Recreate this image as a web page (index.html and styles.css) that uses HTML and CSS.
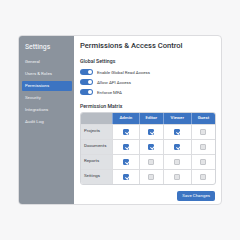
FILE: index.html
```html
<!DOCTYPE html>
<html lang="en">
<head>
  <meta charset="utf-8">
  <meta name="viewport" content="width=device-width, initial-scale=1.0">
  <title>Settings - Permissions</title>
  <link rel="stylesheet" href="styles.css">
</head>
<body>

  <div class="panel">
    <aside class="sidebar">
      <h2>Settings</h2>
      <a class="nav-item">General</a>
      <a class="nav-item">Users &amp; Roles</a>
      <a class="nav-item active">Permissions</a>
      <a class="nav-item">Security</a>
      <a class="nav-item">Integrations</a>
      <a class="nav-item">Audit Log</a>
    </aside>

    <main class="content">
      <h1>Permissions &amp; Access Control</h1>

      <h3>Global Settings</h3>
      <div class="toggle-row"><span class="toggle"></span>Enable Global Read Access</div>
      <div class="toggle-row"><span class="toggle"></span>Allow API Access</div>
      <div class="toggle-row"><span class="toggle"></span>Enforce MFA</div>

      <h3 class="matrix-title">Permission Matrix</h3>
      <table class="matrix">
        <tr>
          <th class="corner"></th>
          <th>Admin</th>
          <th>Editor</th>
          <th>Viewer</th>
          <th>Guest</th>
        </tr>
        <tr>
          <td class="row-label">Projects</td>
          <td><span class="check on"></span></td>
          <td><span class="check on"></span></td>
          <td><span class="check on"></span></td>
          <td><span class="check"></span></td>
        </tr>
        <tr>
          <td class="row-label">Documents</td>
          <td><span class="check on"></span></td>
          <td><span class="check on"></span></td>
          <td><span class="check on"></span></td>
          <td><span class="check"></span></td>
        </tr>
        <tr>
          <td class="row-label">Reports</td>
          <td><span class="check on"></span></td>
          <td><span class="check"></span></td>
          <td><span class="check"></span></td>
          <td><span class="check"></span></td>
        </tr>
        <tr>
          <td class="row-label">Settings</td>
          <td><span class="check on"></span></td>
          <td><span class="check"></span></td>
          <td><span class="check"></span></td>
          <td><span class="check"></span></td>
        </tr>
      </table>

      <div class="actions">
        <button>Save Changes</button>
      </div>
    </main>
  </div>

</body>
</html>
```

FILE: styles.css
```css
body {
  font-family: Roboto, "Liberation Sans", sans-serif;
  margin: 0;
  height: 240px;
  display: flex;
  justify-content: center;
  align-items: center;
  background-color: #f7f7f8;
}
.panel {
  display: flex;
  width: 204px;
  height: 170px;
  border: 1px solid #dcdcdf;
  border-radius: 4px;
  background-color: #fff;
  overflow: hidden;
  box-sizing: border-box;
}

/* Zijbalk */
.sidebar {
  width: 55px;
  flex-shrink: 0;
  background-color: #8b939d;
  padding: 7px 2px 0 3px;
  box-sizing: border-box;
}
.sidebar h2 {
  margin: 0 0 6px 3px;
  font-size: 6.8px;
  font-weight: 500;
  color: #eef0f3;
}
.nav-item {
  display: block;
  height: 10px;
  line-height: 10px;
  padding-left: 3px;
  margin-bottom: 2px;
  font-size: 4.4px;
  color: #eceff2;
  border-radius: 1px;
}
.nav-item.active { background-color: #3c74c2; color: #fff; }

/* Inhoud */
.content {
  flex: 1;
  padding: 5px 6px 0 6px;
  font-size: 4.4px;
  line-height: 1.2;
}
h1 { margin: 0 0 8px; font-size: 7.6px; font-weight: 500; color: #2b2f36; }
h3 { margin: 0 0 3px; font-size: 5.2px; font-weight: 500; color: #2b2f36; }
.matrix-title { margin-top: 6px; margin-bottom: 2px; }

.toggle-row {
  display: flex;
  align-items: center;
  height: 10px;
  color: #3a3e45;
}
.toggle {
  position: relative;
  width: 13px;
  height: 6px;
  margin-right: 4px;
  border-radius: 3px;
  background-color: #3c74c2;
}
.toggle::after {
  content: "";
  position: absolute;
  right: 1px;
  top: 1px;
  width: 4px;
  height: 4px;
  border-radius: 50%;
  background-color: #fff;
}

table.matrix {
  width: 136px;
  border-collapse: separate;
  border-spacing: 0;
  border: 1px solid #d3d5d9;
  border-radius: 3px;
  overflow: hidden;
  font-size: 4.4px;
  line-height: 1;
}
.matrix th {
  height: 11px;
  padding: 0;
  font-weight: 500;
  color: #fff;
  background-color: #3c74c2;
  border-left: 1px solid #7fa3d8;
}
.matrix th.corner { width: 31px; background-color: #b7bcc3; border-left: none; }
.matrix td {
  height: 14px;
  padding: 0;
  text-align: center;
  border-left: 1px solid #dcdde0;
  border-top: 1px solid #dcdde0;
}
.matrix td.row-label {
  text-align: left;
  padding-left: 3px;
  color: #3a3e45;
  background-color: #dfe1e4;
  border-left: none;
}
.check {
  display: inline-block;
  position: relative;
  width: 6px;
  height: 6px;
  vertical-align: middle;
  border-radius: 1px;
  background-color: #e3e4e6;
  border: 0.5px solid #c4c6ca;
  box-sizing: border-box;
}
.check.on { background-color: #3c74c2; border-color: #3c74c2; }
.check.on::after {
  content: "";
  position: absolute;
  left: 1.7px;
  top: 0.5px;
  width: 1.5px;
  height: 3px;
  border: solid #fff;
  border-width: 0 0.9px 0.9px 0;
  transform: rotate(40deg);
}

.actions { display: flex; justify-content: flex-end; margin-top: 6px; padding-right: 1px; }
button {
  height: 10px;
  padding: 0 5px;
  border: none;
  border-radius: 2px;
  font-family: Roboto, "Liberation Sans", sans-serif;
  font-size: 4.4px;
  color: #fff;
  background-color: #3c74c2;
}
```
